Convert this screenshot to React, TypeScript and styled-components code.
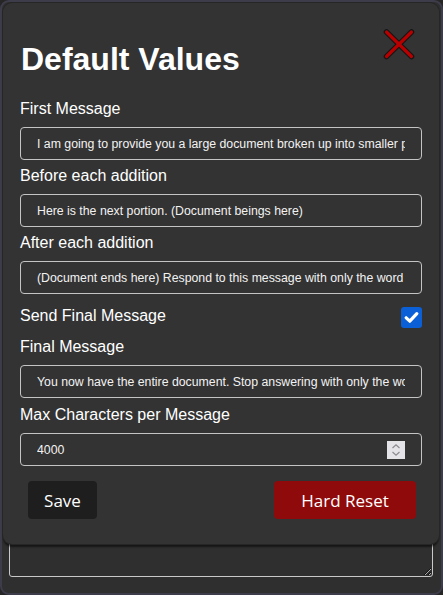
import React from "react";
import styled, { createGlobalStyle } from "styled-components";

const Global = createGlobalStyle`
  html, body { margin: 0; padding: 0; background: #262626; }
  * { box-sizing: border-box; }
`;

const Frame = styled.div`
  position: relative;
  width: 443px;
  height: 595px;
  border: 2px solid #3d3c4b;
  border-radius: 9px;
  background: #2f2f2f;
  display: flex;
  flex-direction: column;
  justify-content: flex-end;
  padding: 0 8px 16px 7px;
  font-family: "Liberation Sans", Arial, sans-serif;
`;

const BackArea = styled.textarea`
  width: 100%;
  height: 110px;
  background: transparent;
  border: 1px solid #c9c9c9;
  border-radius: 3px;
  color: #eee;
`;

const Modal = styled.div`
  position: absolute;
  left: 1px;
  top: 1px;
  width: 436px;
  height: 541px;
  background: #333333;
  border-radius: 9px;
  box-shadow: 0 0 0 1px #262626, 0 3px 2px rgba(0, 0, 0, 0.55);
  padding: 25px 17px 0 17px;
  display: flex;
  flex-direction: column;
`;

const Header = styled.div`
  display: flex;
  justify-content: space-between;
  align-items: flex-start;
  margin-bottom: 15px;
`;

const Title = styled.h1`
  margin: 13px 0 0 1px;
  font-size: 32px;
  line-height: 37px;
  font-weight: bold;
  color: #ffffff;
`;

const CloseButton = styled.button`
  width: 32px;
  height: 32px;
  margin-right: 7px;
  padding: 0;
  border: none;
  background: transparent;
  display: flex;
`;

const Label = styled.label<{ $top?: number }>`
  display: block;
  margin: ${(p) => p.$top ?? 7}px 0 9px 0;
  font-size: 16px;
  line-height: 18px;
  color: #ffffff;
`;

const TextInput = styled.input`
  width: 100%;
  height: 33px;
  padding: 0 16px;
  background: transparent;
  border: 1px solid #c4c4c4;
  border-radius: 4px;
  color: #f2f2f2;
  font-family: "Liberation Sans", Arial, sans-serif;
  font-size: 12.3px;
  outline: none;
`;

const CheckRow = styled.div`
  display: flex;
  justify-content: space-between;
  align-items: flex-start;
  margin-top: 13px;
  height: 21px;
  font-size: 16px;
  line-height: 18px;
  color: #ffffff;
`;

const CheckBox = styled.span`
  width: 21px;
  height: 21px;
  border-radius: 3px;
  background: #0b5fd7;
  display: flex;
  align-items: center;
  justify-content: center;
`;

const NumberBox = styled.div`
  width: 100%;
  height: 33px;
  padding: 0 16px;
  border: 1px solid #c4c4c4;
  border-radius: 4px;
  display: flex;
  align-items: center;
`;

const NumberInput = styled.input`
  flex: 1;
  min-width: 0;
  background: transparent;
  border: none;
  padding: 0;
  color: #f2f2f2;
  font-family: "Liberation Sans", Arial, sans-serif;
  font-size: 12.3px;
  outline: none;
`;

const Spinner = styled.span`
  width: 18px;
  height: 18px;
  background: #e4e4e8;
  display: flex;
`;

const ButtonRow = styled.div`
  display: flex;
  justify-content: space-between;
  margin-top: 15px;
  padding: 0 6px 0 8px;
`;

const Button = styled.button<{ $danger?: boolean; $w: number }>`
  width: ${(p) => p.$w}px;
  height: 38px;
  border: none;
  border-radius: 4px;
  background: ${(p) => (p.$danger ? "#8f0b0b" : "#1e1e1e")};
  color: #ffffff;
  font-family: "Open Sans", "Segoe UI", sans-serif;
  font-size: 17px;
  padding: 0;
`;

export default function App() {
  return (
    <>
      <Global />
      <Frame>
        <BackArea readOnly defaultValue="" />
        <Modal>
          <Header>
            <Title>Default Values</Title>
            <CloseButton aria-label="Close">
              <svg width="32" height="32" viewBox="0 0 32 32">
                <g strokeLinecap="round">
                  <line x1="3.5" y1="4" x2="28.5" y2="28.5" stroke="#151515" strokeWidth="5.5" />
                  <line x1="28.5" y1="4" x2="3.5" y2="28.5" stroke="#151515" strokeWidth="5.5" />
                  <line x1="3.5" y1="4" x2="28.5" y2="28.5" stroke="#b80000" strokeWidth="3.2" />
                  <line x1="28.5" y1="4" x2="3.5" y2="28.5" stroke="#b80000" strokeWidth="3.2" />
                </g>
              </svg>
            </CloseButton>
          </Header>

          <Label>First Message</Label>
          <TextInput
            readOnly
            defaultValue="I am going to provide you a large document broken up into smaller parts."
          />
          <Label>Before each addition</Label>
          <TextInput readOnly defaultValue="Here is the next portion. (Document beings here)" />
          <Label>After each addition</Label>
          <TextInput
            readOnly
            defaultValue="(Document ends here) Respond to this message with only the word OK."
          />

          <CheckRow>
            <span>Send Final Message</span>
            <CheckBox>
              <svg width="15" height="15" viewBox="0 0 15 15">
                <path
                  d="M2.2 7.8 L5.8 11.2 L12.8 3.6"
                  fill="none"
                  stroke="#ffffff"
                  strokeWidth="3.2"
                  strokeLinecap="round"
                  strokeLinejoin="round"
                />
              </svg>
            </CheckBox>
          </CheckRow>

          <Label $top={10}>Final Message</Label>
          <TextInput
            readOnly
            defaultValue="You now have the entire document. Stop answering with only the word OK."
          />
          <Label $top={8}>Max Characters per Message</Label>
          <NumberBox>
            <NumberInput readOnly defaultValue="4000" />
            <Spinner>
              <svg width="18" height="18" viewBox="0 0 18 18">
                <path d="M5.5 7 L9 3.8 L12.5 7" fill="none" stroke="#8a8a90" strokeWidth="1.2" />
                <path d="M5.5 11 L9 14.2 L12.5 11" fill="none" stroke="#8a8a90" strokeWidth="1.2" />
              </svg>
            </Spinner>
          </NumberBox>

          <ButtonRow>
            <Button $w={69}>Save</Button>
            <Button $danger $w={142}>Hard Reset</Button>
          </ButtonRow>
        </Modal>
      </Frame>
    </>
  );
}
